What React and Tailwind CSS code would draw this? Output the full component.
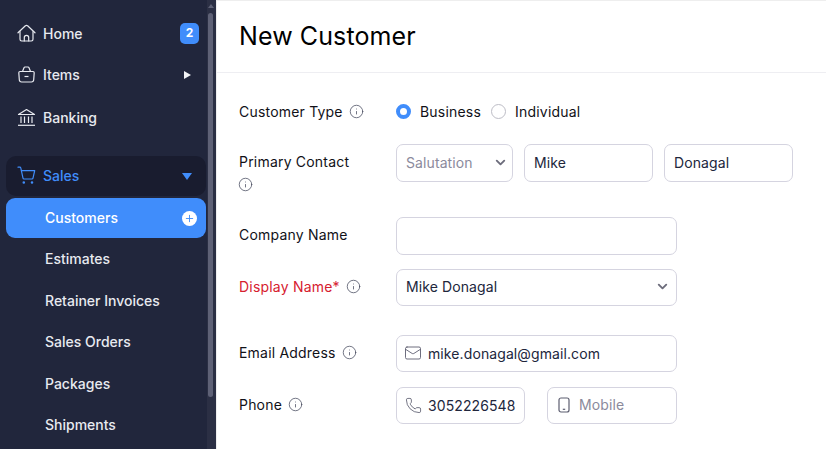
import { Mail, Phone, ChevronDown, Info, Plus } from 'lucide-react'

const font = { fontFamily: 'Inter, sans-serif' }

function HomeIcon() {
  return (
    <svg width="19" height="19" viewBox="0 0 19 19" fill="none" stroke="currentColor" strokeWidth="1.2" strokeLinecap="round" strokeLinejoin="round">
      <path d="M1 8.800 8.400 1.800c.6-.6 1.600-.6 2.200 0L18 8.800" />
      <path d="M3 7.500v7.800c0 1 .7 1.700 1.700 1.700h9.600c1 0 1.700-.7 1.700-1.700V7.500" />
      <path d="M7.300 17v-3.500c0-1.200 1-2.200 2.200-2.200s2.200 1 2.200 2.200V17" />
    </svg>
  )
}

function ItemsIcon() {
  return (
    <svg width="19" height="19" viewBox="0 0 19 19" fill="none" stroke="currentColor" strokeWidth="1.2">
      <path d="M3 6.500h13c.8 0 1.200.5 1.200 1.300l-.5 7c-.1 1.400-1 2.200-2.300 2.200H4.600c-1.300 0-2.200-.8-2.300-2.200l-.5-7C1.800 7 2.200 6.500 3 6.500Z" />
      <path d="M5.500 6.500 7 2.800c.2-.5.5-.8 1-.8h3c.5 0 .8.300 1 .8l1.500 3.700" />
      <path d="M7.500 11.500h4" />
    </svg>
  )
}

function BankIcon() {
  return (
    <svg width="19" height="19" viewBox="0 0 19 19" fill="none" stroke="currentColor" strokeWidth="1.2" strokeLinejoin="round">
      <path d="M1.500 6.500 9.500 1.500l8 5Z" />
      <path d="M4 8.500v6.500M7.500 8.500v6.500M11.500 8.500v6.500M15 8.500v6.500" />
      <path d="M1 17.300h17" />
    </svg>
  )
}

function CartIcon() {
  return (
    <svg width="19" height="19" viewBox="0 0 19 19" fill="none" stroke="currentColor" strokeWidth="1.2" strokeLinecap="round" strokeLinejoin="round">
      <path d="M1 1.200h1.800c.5 0 .9.300 1 .8L6 12.200c.1.500.5.800 1 .8h8c.5 0 .9-.3 1-.8l1.700-7.500H4.200" />
      <circle cx="6.800" cy="16.500" r=".7" />
      <circle cx="15" cy="16.500" r=".7" />
    </svg>
  )
}

function MobileIcon() {
  return (
    <svg width="14" height="16" viewBox="0 0 14 16" fill="none" stroke="currentColor" strokeWidth="1.2" className="text-[#5d5e70] shrink-0">
      <rect x="2" y="1" width="10" height="14" rx="2" />
      <path d="M5.800 12.300h2.400" />
    </svg>
  )
}

function NavRow({ icon, label, right, className = '' }) {
  return (
    <div className={`flex items-center pl-[17px] pr-[8px] text-[14px] font-medium text-[#e8eaf0] ${className}`}>
      <span className="w-[26px] flex items-center">{icon}</span>
      <span>{label}</span>
      <span className="ml-auto flex items-center">{right}</span>
    </div>
  )
}

function SubRow({ label, className = '' }) {
  return <div className={`flex items-center pl-[45px] pb-[2px] text-[14px] font-medium text-[#e8eaf0] ${className}`}>{label}</div>
}

function Sidebar() {
  return (
    <aside className="w-[216px] h-full shrink-0 bg-[#21263c] flex overflow-hidden">
      <nav className="w-[207px] shrink-0 pt-[14px]">
        <NavRow
          className="h-[40px] pb-[2px]"
          icon={<HomeIcon />}
          label="Home"
          right={<span className="w-[19px] h-[21px] rounded-[5px] bg-[#408dfb] text-white text-[12px] font-bold flex items-center justify-center">2</span>}
        />
        <NavRow
          className="h-[42px] pb-[2px]"
          icon={<ItemsIcon />}
          label="Items"
          right={<span className="mr-[8px] mt-[2px] w-0 h-0 border-y-[4px] border-y-transparent border-l-[7px] border-l-[#f2f3f6]" />}
        />
        <NavRow className="h-[43px]" icon={<BankIcon />} label="Banking" />
        <div className="ml-[6px] mt-[17px] pb-[2px] h-[40px] w-[200px] rounded-[10px] bg-[#191c2f] flex items-center pl-[11px] pr-[14px] text-[14px] font-medium text-[#408dfb]">
          <span className="w-[26px] flex items-center"><CartIcon /></span>
          <span>Sales</span>
          <span className="ml-auto mt-[2px] w-0 h-0 border-x-[5px] border-x-transparent border-t-[7px] border-t-[#408dfb]" />
        </div>
        <div className="ml-[6px] mt-[2px] pb-[2px] h-[40px] w-[200px] rounded-[9px] bg-[#408dfb] flex items-center pl-[39px] pr-[9px] text-[14px] font-medium text-white">
          <span>Customers</span>
          <span className="ml-auto mt-[2px] w-[15px] h-[15px] rounded-full bg-white flex items-center justify-center text-[#408dfb]"><Plus size={11} strokeWidth={2} /></span>
        </div>
        <SubRow className="h-[42px]" label="Estimates" />
        <SubRow className="h-[42px]" label="Retainer Invoices" />
        <SubRow className="h-[41px]" label="Sales Orders" />
        <SubRow className="h-[42px]" label="Packages" />
        <SubRow className="h-[41px]" label="Shipments" />
      </nav>
      <div className="w-[9px] shrink-0 bg-[#2b2f44] flex flex-col items-center">
        <span className="mt-[4px] w-0 h-0 border-x-[3px] border-x-transparent border-b-[4px] border-b-[#5e6176] -translate-x-[1px]" />
        <span className="mt-[5px] w-[5px] h-[384px] rounded-full bg-[#5e6176] -translate-x-[1px]" />
      </div>
    </aside>
  )
}

function Hint() {
  return <Info size={15} strokeWidth={1.2} className="text-[#44485c] shrink-0" />
}

function Label({ className = '', children }) {
  return <div className={`w-[157px] flex items-center gap-[6px] pb-[3px] ${className}`}>{children}</div>
}

function Field({ className = '', children }) {
  return (
    <div className={`flex items-center rounded-[7px] border border-[#d5d4e0] bg-white pb-[1px] text-[14px] tracking-[0.1px] ${className}`}>
      {children}
    </div>
  )
}

function Form() {
  return (
    <div className="pl-[22px] pt-[27px] text-[14px] tracking-[0.2px] text-[#111118]">
      <div className="flex items-center h-[22px]">
        <div className="w-[157px] flex items-center gap-[6px]">Customer Type <Hint /></div>
        <span className="w-[15px] h-[15px] rounded-full border-[4px] border-[#408dfb] bg-white" />
        <span className="ml-[9px]">Business</span>
        <span className="ml-[10px] w-[15px] h-[15px] rounded-full border border-[#bdbdc6] bg-white" />
        <span className="ml-[9px]">Individual</span>
      </div>
      <div className="flex mt-[22px]">
        <div className="w-[157px] h-[38px] pt-[8px]">
          <div className="leading-[20px]">Primary Contact</div>
          <div className="mt-[5px] -ml-[1px]"><Hint /></div>
        </div>
        <div className="flex gap-[11px]">
          <Field className="w-[117px] h-[38px] pl-[9px] pr-[4px] justify-between text-[#8b8a9c]">
            Salutation
            <ChevronDown size={15} strokeWidth={3} className="text-[#6d6d7c]" />
          </Field>
          <Field className="w-[129px] h-[38px] pl-[9px] text-[#21263c]">Mike</Field>
          <Field className="w-[129px] h-[38px] pl-[9px] text-[#21263c]">Donagal</Field>
        </div>
      </div>
      <div className="flex items-center mt-[35px]">
        <Label>Company Name</Label>
        <Field className="w-[281px] h-[38px]" />
      </div>
      <div className="flex items-center mt-[14px]">
        <Label className="text-[#d6202f]">Display Name* <Hint /></Label>
        <Field className="w-[281px] h-[37px] pl-[9px] pr-[6px] pb-[2px] justify-between text-[#21263c]">
          Mike Donagal
          <ChevronDown size={15} strokeWidth={3} className="text-[#6d6d7c]" />
        </Field>
      </div>
      <div className="flex items-center mt-[29px]">
        <Label>Email Address <Hint /></Label>
        <Field className="w-[281px] h-[37px] pl-[7px] gap-[6px] text-[#21263c]">
          <Mail size={18} strokeWidth={1.2} className="text-[#5d5e70]" />
          mike.donagal@gmail.com
        </Field>
      </div>
      <div className="flex items-center mt-[15px]">
        <Label>Phone <Hint /></Label>
        <Field className="w-[129px] h-[37px] pl-[8px] gap-[6px] text-[#21263c]">
          <Phone size={17} strokeWidth={1.2} className="text-[#5d5e70]" />
          3052226548
        </Field>
        <Field className="ml-[22px] w-[130px] h-[37px] pl-[9px] pb-[2px] gap-[8px] text-[#8b8a9c]">
          <MobileIcon />
          Mobile
        </Field>
      </div>
    </div>
  )
}

export default function App() {
  return (
    <div className="w-[826px] h-[449px] flex overflow-hidden bg-white" style={font}>
      <Sidebar />
      <main className="flex-1 min-w-0 border-l border-l-[#eeeeee]">
        <header className="h-[73px] border-t border-b border-t-[#eeeeee] border-b-[#eeeef2] pl-[22px] flex items-center text-[25px] tracking-[0.1px] text-black">
          New Customer
        </header>
        <Form />
      </main>
    </div>
  )
}
